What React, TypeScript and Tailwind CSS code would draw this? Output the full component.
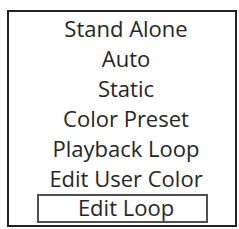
export default function App() {
  const items = ["Stand Alone", "Auto", "Static", "Color Preset", "Playback Loop", "Edit User Color"];

  return (
    <div className="w-[239px] h-[229px] bg-white pt-[10px] pl-[7px] overflow-hidden">
      <div
        className="w-[230px] h-[217px] border-2 border-[#232323] flex flex-col items-center text-[#262626] text-[22px]"
        style={{ fontFamily: '"Open Sans", "Liberation Sans", sans-serif' }}
      >
        <ul className="flex flex-col items-center pt-[1px] pl-[8px]">
          {items.map((item) => (
            <li key={item} className="leading-[30px] whitespace-nowrap">
              {item}
            </li>
          ))}
        </ul>
        <div className="w-[171px] h-[29px] mt-[1px] border-2 border-[#505050] flex justify-center leading-[20px] pt-[1px] pl-[8px]">
          Edit Loop
        </div>
      </div>
    </div>
  );
}
